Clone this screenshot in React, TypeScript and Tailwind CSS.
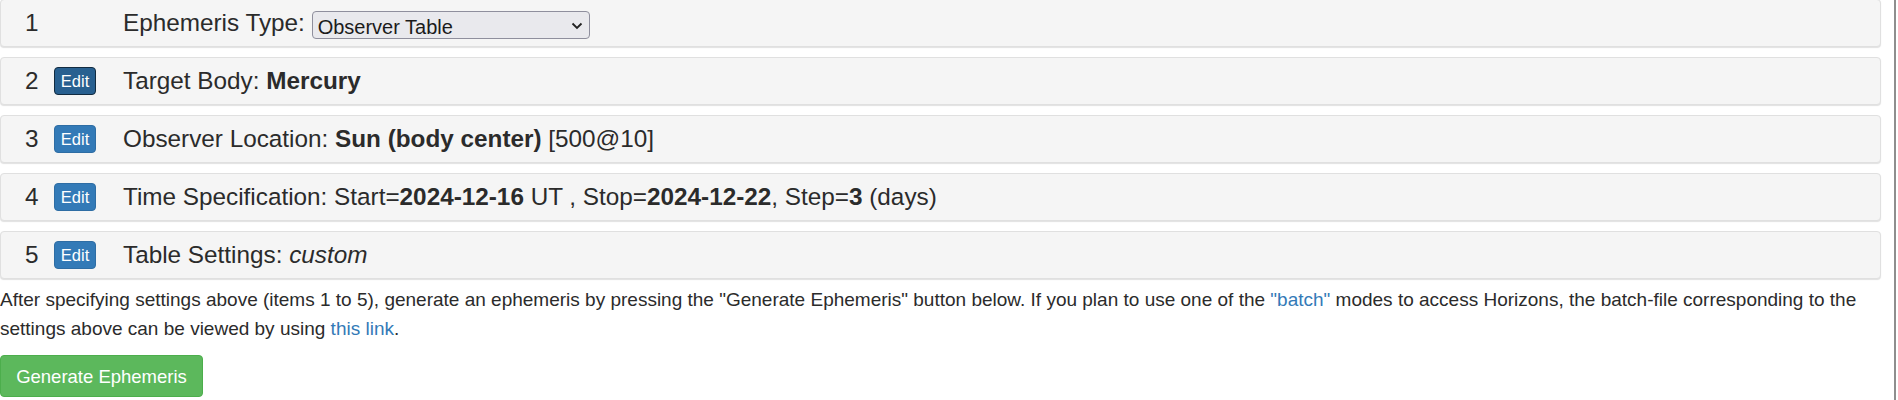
import React from "react";

const font = { fontFamily: '"Liberation Sans", Arial, Helvetica, sans-serif' };

function EditBtn({ active }: { active?: boolean }) {
  return (
    <span
      className={
        "inline-flex h-[28px] w-[42px] items-center justify-center rounded-[4px] border text-[16.5px] leading-none text-white " +
        (active ? "bg-[#286090] border-[#122b40]" : "bg-[#337ab7] border-[#2e6da4]")
      }
    >
      Edit
    </span>
  );
}

function Panel({ n, edit, active, last, children }: { n: number; edit?: boolean; active?: boolean; last?: boolean; children: React.ReactNode }) {
  return (
    <div
      className={
        "flex h-[48px] items-center rounded-[4px] border border-[#e0e0e0] bg-[#f5f5f5] pl-[24px] text-[24.3px] text-[#2b2b2b] shadow-[0_1px_1px_rgba(0,0,0,0.12)] " +
        (last ? "mb-0" : "mb-[10px]")
      }
    >
      <span className="w-[29px]">{n}</span>
      <span className="flex w-[69px] items-center">{edit ? <EditBtn active={active} /> : null}</span>
      <div className="flex items-center whitespace-nowrap">{children}</div>
    </div>
  );
}

export default function App() {
  return (
    <div className="flex h-[400px] w-[1898px] overflow-hidden bg-white" style={font}>
      <div className="w-[1881px] -mt-px">
        <Panel n={1}>
          <span>Ephemeris Type:&nbsp;</span>
          <span className="relative mt-[3px] inline-flex">
            <select
              className="h-[28px] w-[278px] appearance-none rounded-[4px] border border-[#8f8f9d] bg-[#e9e9ed] pl-[5px] text-[20px] text-[#1b1b1b] outline-none"
              style={font}
              defaultValue="obs"
            >
              <option value="obs">Observer Table</option>
            </select>
            <svg className="pointer-events-none absolute right-[7px] top-[11px]" width="12" height="8" viewBox="0 0 12 8">
              <polyline points="1.5,1.5 6,6 10.5,1.5" fill="none" stroke="#222" strokeWidth="1.8" />
            </svg>
          </span>
        </Panel>
        <Panel n={2} edit active>
          <span>
            Target Body: <b>Mercury</b>
          </span>
        </Panel>
        <Panel n={3} edit>
          <span>
            Observer Location: <b>Sun (body center)</b> [500@10]
          </span>
        </Panel>
        <Panel n={4} edit>
          <span>
            Time Specification: Start=<b>2024-12-16</b> UT , Stop=<b>2024-12-22</b>, Step=<b>3</b> (days)
          </span>
        </Panel>
        <Panel n={5} edit last>
          <span>
            Table Settings: <i>custom</i>
          </span>
        </Panel>
        <p className="mt-[6px] mb-[12px] text-[19px] leading-[29px] text-[#2b2b2b]">
          After specifying settings above (items 1 to 5), generate an ephemeris by pressing the "Generate Ephemeris" button below. If you plan to use one of the{" "}
          <a className="text-[#337ab7]">"batch"</a> modes to access Horizons, the batch-file corresponding to the
          <br />
          settings above can be viewed by using <a className="text-[#337ab7]">this link</a>.
        </p>
        <button className="h-[42px] w-[203px] rounded-[4px] border border-[#4cae4c] bg-[#5cb85c] text-[18.5px] leading-[25px] text-white" style={font}>
          Generate Ephemeris
        </button>
      </div>
      <div className="w-[13px]" />
      <div className="h-full w-[2px] bg-[#8e8e8e]" />
    </div>
  );
}
